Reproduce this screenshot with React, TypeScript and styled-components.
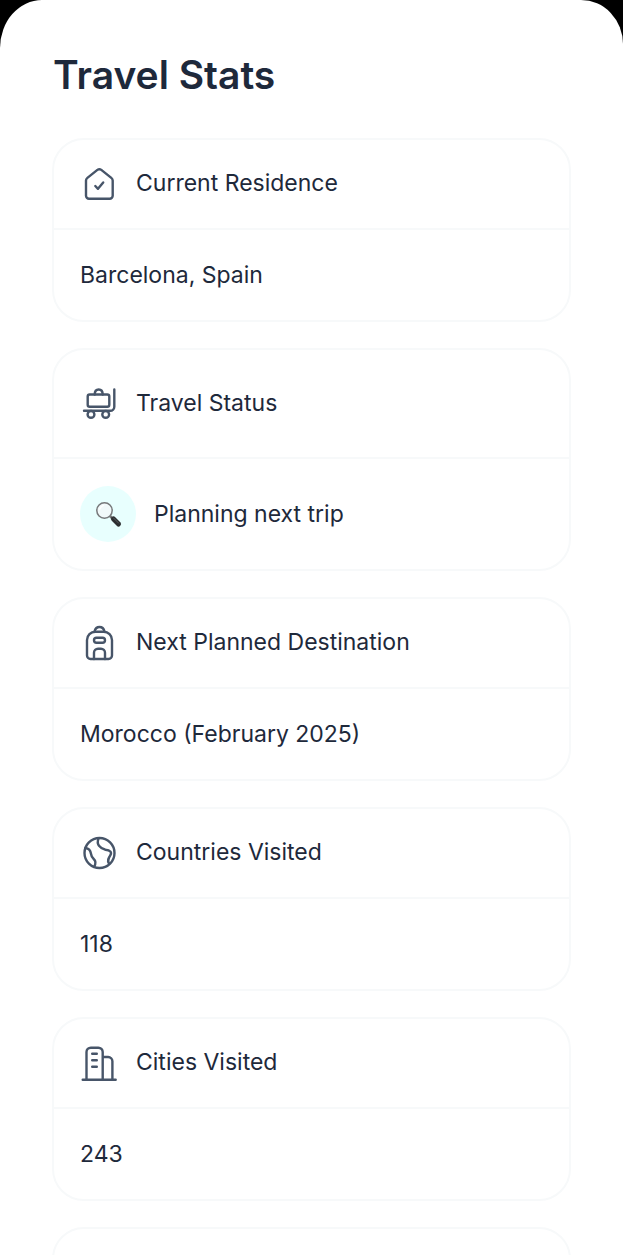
import React from "react";
import styled, { createGlobalStyle } from "styled-components";

const GlobalStyle = createGlobalStyle`
  *, *::before, *::after { box-sizing: border-box; }
  body {
    margin: 0;
    background: #000;
    color: #1e293b;
    font-family: Inter, "Liberation Sans", sans-serif;
  }
`;

const Sheet = styled.main`
  height: 100vh;
  overflow: hidden;
  padding: 50px 52px 0;
  background: #fff;
  border-radius: 42px 42px 0 0 / 48px 44px 0 0;
`;

const Title = styled.h1`
  margin: 0 0 38px 1px;
  font-size: 39px;
  line-height: 50px;
  font-weight: 600;
  font-optical-sizing: none;
`;

const CardList = styled.div`
  display: flex;
  flex-direction: column;
  gap: 26px;
`;

const Card = styled.section`
  flex: none;
  border: 2px solid #f7f9fa;
  border-radius: 32px;
`;

const CardHeader = styled.header<{ $tall?: boolean }>`
  display: flex;
  align-items: center;
  gap: 18px;
  min-height: ${(p) => (p.$tall ? 109 : 90)}px;
  padding: 0 26px;
  border-bottom: 2px solid #f7f9fa;
`;

const CardTitle = styled.h2`
  margin: 0;
  padding-bottom: 2px;
  font-size: 23px;
  line-height: 32px;
  font-weight: 400;
`;

const CardBody = styled.div<{ $tall?: boolean }>`
  display: flex;
  align-items: center;
  gap: 18px;
  min-height: ${(p) => (p.$tall ? 110 : 90)}px;
  padding: 0 26px;
`;

const Value = styled.p`
  margin: 0;
  font-size: 23px;
  line-height: 32px;
`;

const Icon = styled.svg.attrs({ viewBox: "0 0 38 38", "aria-hidden": true })`
  flex: none;
  width: 38px;
  height: 38px;
  fill: none;
  stroke: #475569;
  stroke-width: 2.4;
  stroke-linecap: round;
  stroke-linejoin: round;
`;

const Badge = styled.span`
  display: flex;
  flex: none;
  width: 56px;
  height: 56px;
  border-radius: 50%;
  background: #e8fffe;
`;

const HomeIcon = () => (
  <Icon>
    <path d="M6 15.6c0-1.2.5-2 1.400-2.700l10-8c1.200-.9 2.700-.9 3.900 0l10 8c.9.7 1.400 1.500 1.400 2.700V30.700a3 3 0 0 1-3 3H9a3 3 0 0 1-3-3z" />
    <path d="M15.300 21l2.700 2.800 5.200-6.300" />
  </Icon>
);

const LuggageIcon = () => (
  <Icon>
    <rect x="7.700" y="9.500" width="21.600" height="12.300" rx="2" />
    <path d="M14.700 9.500c0-3.400 1.400-5 4-5s4 1.600 4 5M4 25.700h26.300a4 4 0 0 0 4-4V4.500" />
    <circle cx="11" cy="29.400" r="3.400" />
    <circle cx="25.700" cy="29.400" r="3.400" />
  </Icon>
);

const BackpackIcon = () => (
  <Icon>
    <path d="M7 16a8.300 8.300 0 0 1 8.300-8.300h8.400A8.300 8.300 0 0 1 32 16v15.500a3.500 3.500 0 0 1-3.500 3.500h-18A3.500 3.500 0 0 1 7 31.500z" />
    <path d="M14.500 7.500c.7-3 2.300-4.500 5-4.500s4.300 1.500 5 4.500M14 35v-6.300a4 4 0 0 1 4-4h3a4 4 0 0 1 4 4V35" />
    <rect x="14" y="13.700" width="11" height="5" rx="2.500" />
  </Icon>
);

const GlobeIcon = () => (
  <Icon>
    <circle cx="19.500" cy="19" r="15" />
    <path d="M18.600 4.300c-1.200 3-1 5.700.4 7.500 1.700 2.200 3.600 3.500 6.500 4 4.800.5 6.500 2.300 5 5.200-2 3.200-3.500 5.500-1.500 8.500" />
    <path d="M5.500 14c3.800.4 5 2.500 5.400 5.500.4 3 1 3.900 2.800 5.500 2.500 2.300 2.300 4.700.3 8" />
  </Icon>
);

const CityIcon = () => (
  <Icon>
    <path d="M2.700 35.700h33M6.500 35.700V8a4.300 4.300 0 0 1 4.300-4.300h7.600A4.300 4.300 0 0 1 22.700 8v27.700M22.700 13h5.500a4.200 4.200 0 0 1 4.200 4.200v18.500M12.200 9.700h4.600M12.200 16.300h4.600M12.200 22.700h4.600" />
  </Icon>
);

const MagnifierIcon = () => (
  <svg width="56" height="56" viewBox="0 0 56 56" aria-hidden="true">
    <path d="M30 30l4 4" stroke="#777" strokeWidth="2.500" />
    <path d="M33.500 33l5 5" stroke="#2d2f31" strokeWidth="5" strokeLinecap="round" />
    <path d="M33.500 32l5 5" stroke="#5b5e60" strokeWidth="1" strokeLinecap="round" />
    <circle cx="24.500" cy="24.500" r="7.700" fill="#f1f9fa" stroke="#77797b" strokeWidth="1.500" />
    <path d="M19.800 23a5.500 5.500 0 0 1 3.700-3.600" fill="none" stroke="#fff" strokeWidth="1.500" strokeLinecap="round" />
  </svg>
);

type Stat = {
  label: string;
  value: string;
  icon: React.ReactNode;
  badge?: React.ReactNode;
};

const stats: Stat[] = [
  { label: "Current Residence", value: "Barcelona, Spain", icon: <HomeIcon /> },
  {
    label: "Travel Status",
    value: "Planning next trip",
    icon: <LuggageIcon />,
    badge: <MagnifierIcon />,
  },
  {
    label: "Next Planned Destination",
    value: "Morocco (February 2025)",
    icon: <BackpackIcon />,
  },
  { label: "Countries Visited", value: "118", icon: <GlobeIcon /> },
  { label: "Cities Visited", value: "243", icon: <CityIcon /> },
];

export default function App() {
  return (
    <>
      <GlobalStyle />
      <Sheet>
        <Title>Travel Stats</Title>
        <CardList>
          {stats.map(({ label, value, icon, badge }) => (
            <Card key={label}>
              <CardHeader $tall={!!badge}>
                {icon}
                <CardTitle>{label}</CardTitle>
              </CardHeader>
              <CardBody $tall={!!badge}>
                {badge && <Badge>{badge}</Badge>}
                <Value>{value}</Value>
              </CardBody>
            </Card>
          ))}
          <Card>
            <CardHeader />
            <CardBody />
          </Card>
        </CardList>
      </Sheet>
    </>
  );
}
